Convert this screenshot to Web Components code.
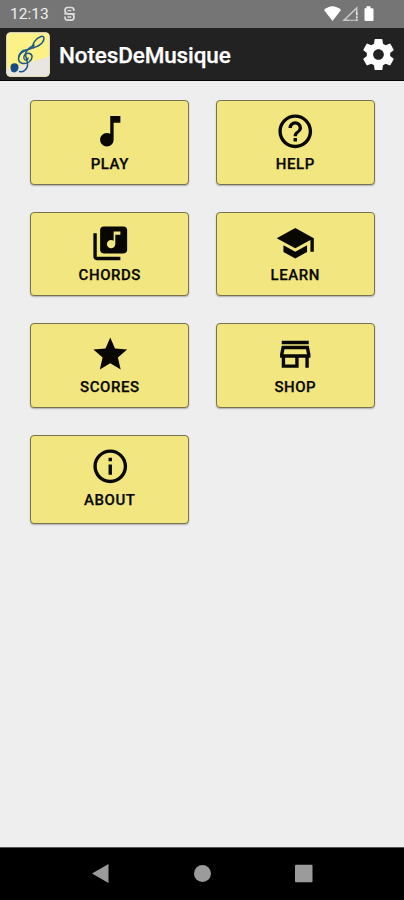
<!DOCTYPE html>
<html lang="en">
<head>
<meta charset="utf-8">
<title>NotesDeMusique</title>
<style>
html,body{margin:0;height:100%;background:#eee;font-family:Roboto,"Liberation Sans",sans-serif}
</style>
</head>
<body>
<music-app></music-app>
<script>
const define = (name, html) => {
  const t = document.createElement('template');
  t.innerHTML = html;
  customElements.define(name, class extends HTMLElement {
    constructor() {
      super();
      this.attachShadow({mode: 'open'}).append(t.content.cloneNode(true));
    }
  });
};

const ICONS = {
  play: '<path d="M12 3v10.55c-.59-.34-1.27-.55-2-.55-2.21 0-4 1.79-4 4s1.79 4 4 4 4-1.79 4-4V7h4V3h-6z"/>',
  help: '<path d="M11 18h2v-2h-2v2zm1-16C6.48 2 2 6.48 2 12s4.480 10 10 10 10-4.480 10-10S17.520 2 12 2zm0 18c-4.410 0-8-3.590-8-8s3.590-8 8-8 8 3.590 8 8-3.590 8-8 8zm0-14c-2.210 0-4 1.790-4 4h2c0-1.100.900-2 2-2s2 .900 2 2c0 2-3 1.750-3 5h2c0-2.250 3-2.500 3-5 0-2.210-1.790-4-4-4z"/>',
  chords: '<path d="M20 2H8c-1.100 0-2 .900-2 2v12c0 1.100.900 2 2 2h12c1.100 0 2-.900 2-2V4c0-1.100-.900-2-2-2zm-2 5h-3v5.500c0 1.380-1.120 2.500-2.500 2.500S10 13.880 10 12.500s1.120-2.500 2.500-2.500c.570 0 1.080.190 1.500.510V5h4v2zM4 6H2v14c0 1.100.900 2 2 2h14v-2H4V6z"/>',
  learn: '<path d="M5 13.180v4L12 21l7-3.820v-4L12 17l-7-3.820zM12 3L1 9l11 6 9-4.910V17h2V9L12 3z"/>',
  scores: '<path d="M12 17.270L18.180 21l-1.640-7.030L22 9.240l-7.190-.610L12 2 9.190 8.630 2 9.240l5.460 4.730L5.820 21z"/>',
  shop: '<path d="M18.360 9l.600 3H5.040l.600-3h12.720M20 4H4v2h16V4zm0 3H4l-1 5v2h1v6h10v-6h4v6h2v-6h1v-2l-1-5zM6 18v-4h6v4H6z"/>',
  about: '<path d="M11 7h2v2h-2zm0 4h2v6h-2zm1-9C6.480 2 2 6.480 2 12s4.480 10 10 10 10-4.480 10-10S17.520 2 12 2zm0 18c-4.410 0-8-3.590-8-8s3.590-8 8-8 8 3.590 8 8-3.590 8-8 8z"/>',
  settings: '<path d="M19.140 12.940c.040-.300.060-.610.060-.940 0-.320-.020-.640-.070-.940l2.030-1.580c.180-.140.230-.410.120-.610l-1.920-3.320c-.120-.220-.370-.290-.590-.220l-2.390.960c-.500-.380-1.030-.700-1.620-.940l-.360-2.540c-.040-.240-.240-.410-.480-.410h-3.840c-.240 0-.430.170-.470.410l-.360 2.540c-.590.240-1.130.570-1.620.940l-2.390-.960c-.220-.080-.470 0-.590.220L2.740 8.870c-.120.210-.080.470.120.610l2.030 1.580c-.050.300-.090.630-.090.940s.020.640.070.940l-2.030 1.580c-.180.140-.230.410-.120.610l1.920 3.320c.120.220.370.290.590.220l2.390-.960c.500.380 1.030.700 1.620.940l.360 2.540c.050.240.240.410.480.410h3.840c.240 0 .440-.170.470-.410l.360-2.540c.590-.240 1.130-.560 1.620-.940l2.390.960c.220.080.470 0 .590-.220l1.920-3.320c.120-.220.070-.470-.120-.610l-2.010-1.580zM12 15.300c-1.820 0-3.300-1.480-3.300-3.300s1.480-3.300 3.300-3.300 3.300 1.480 3.300 3.300-1.480 3.300-3.300 3.300z"/>'
};

customElements.define('md-icon', class extends HTMLElement {
  constructor() {
    super();
    this.attachShadow({mode: 'open'});
  }
  connectedCallback() {
    this.shadowRoot.innerHTML = `<style>:host{display:block;width:40.5px;height:40.5px}svg{display:block;width:100%;height:100%;fill:currentColor}</style><svg viewBox="0 0 24 24">${ICONS[this.getAttribute('name')]}</svg>`;
  }
});

define('status-bar', `<style>
:host{display:flex;align-items:center;height:28px;box-sizing:border-box;background:#757575;color:#f0f0f0;padding:0 29px 0 10px;font-size:15.500px}
.time{width:53px;line-height:28px}
svg{display:block}
.right{margin-left:auto}
</style>
<span class="time"><slot></slot></span>
<svg width="13" height="16" viewBox="0 0 13 16" fill="none" stroke="#dedede" stroke-width="1.700"><path d="M10.800 5V4Q10.800 1.500 8.300 1.500H4.500Q2 1.500 2 4.500Q2 7.800 5 7.800H8Q11 7.800 11 11Q11 14.200 8.300 14.200H4.500Q2 14.200 2 11.500V10.500"/><path d="M1 7.800H12.200M4.500 4.700H8.300M4.500 11H8.300" stroke-width="1.300"/></svg>
<svg class="right" width="51" height="18" viewBox="0 0 51 18"><path d="M0 5Q8.500-2.500 17 5L8.500 16Z" fill="#fff"/><path d="M20 15.300H32.700V3Z" fill="none" stroke="#ccc" stroke-width="1.500"/><path d="M24.500 15.500 33 7V15.500Z" fill="#757575" opacity=".5"/><path d="M32.700 7V10M32.700 11.500V13M32.700 14.500V16" stroke="#e4e4e4" stroke-width="1.500"/><path d="M40.500 3.200H42.500V1.300H46.500V3.200H48.500Q49.500 3.200 49.500 4.200V15Q49.500 16 48.500 16H41.500Q40.500 16 40.500 15Z" fill="#fff"/></svg>`);

define('clef-logo', `<style>:host{display:block;width:44px;height:45px}svg{display:block}</style>
<svg width="44" height="45" viewBox="0 0 44 45"><defs><clipPath id="c"><rect x=".5" y=".5" width="43" height="44" rx="4"/></clipPath></defs>
<g clip-path="url(#c)"><rect width="44" height="45" fill="#fcf184"/><path d="M0 38 44 24V45H0Z" fill="#e9e5e1"/></g>
<rect x=".8" y=".8" width="42.400" height="43.400" rx="4" fill="none" stroke="#ede8c8" stroke-width="1.200"/>
<g fill="none" stroke="#1d5787" stroke-width="1.500" stroke-linecap="round" stroke-linejoin="round">
<path d="M27.500 16C25.500 12 30 6 35 4.500C39 3.500 38.500 8 36 11C33 14.500 29 15 25 16.500C19 18 12.500 21 12.500 26.500C12.500 31.500 18.500 33 23 30C27 27 27 22.500 23.500 21.500C20 20.500 17 23.500 18 26.500C19 29 22 28.500 22 26"/>
<path d="M28 13C24 15.500 19.500 18 19.500 22C19.500 26 22.500 30 21.500 34C20.500 38 17 40.500 13.500 39.500M13 25C13.500 20 17 17.500 21 18.500"/>
<path d="M5.500 37.500C6 40 9 40.500 11 38"/></g>
<circle cx="8.500" cy="35.300" r="4" fill="#174c80"/></svg>`);

define('app-bar', `<style>
:host{display:flex;align-items:center;height:53px;box-sizing:border-box;padding:0 6px;background:#222;border-bottom:1.500px solid #050505;color:#fff}
h1{margin:0 0 0 9px;padding-top:2px;font-size:22.500px;font-weight:500;line-height:28px;letter-spacing:-.13px;-webkit-text-stroke:.25px #fff}
md-icon{margin-left:auto;width:39px;height:39px}
</style><clef-logo></clef-logo><h1><slot></slot></h1><md-icon name="settings"></md-icon>`);

customElements.define('menu-card', class extends HTMLElement {
  constructor() {
    super();
    this.attachShadow({mode: 'open'});
  }
  connectedCallback() {
    this.shadowRoot.innerHTML = `<style>
:host{display:flex;flex-direction:column;align-items:center;gap:2px;box-sizing:border-box;height:84.500px;padding-top:10px;background:#f1e680;border:1px solid #77734f;border-radius:4px;box-shadow:0 1px 1.500px #0004;color:#080800;font-size:15px;font-weight:500;line-height:20px;letter-spacing:.55px}
span{-webkit-text-stroke:.25px currentColor}
:host([tall]){height:89.500px;gap:4px}
</style><md-icon name="${this.getAttribute('icon')}"></md-icon><span><slot></slot></span>`;
  }
});

define('menu-grid', `<style>
:host{display:grid;grid-template-columns:159px 159px;column-gap:26.500px;row-gap:26.900px;align-content:start;padding:19.400px 0 0 30.300px;flex:1}
</style><slot></slot>`);

define('nav-bar', `<style>
:host{display:flex;justify-content:space-between;height:53px;box-sizing:border-box;padding:16px 91px 0 92px;background:#000;border-top:1px solid #555}
svg{display:block;fill:#9b9b9b}
</style>
<svg width="18" height="20"><path d="M16.500 0V19L0 9.500Z"/></svg>
<svg width="18" height="20"><circle cx="8.500" cy="9.500" r="8.500"/></svg>
<svg width="18" height="20"><rect y=".7" width="17.500" height="17.500" rx="1"/></svg>`);

define('music-app', `<style>
:host{display:flex;flex-direction:column;height:900px;background:#eee}
</style>
<status-bar>12:13</status-bar>
<app-bar>NotesDeMusique</app-bar>
<menu-grid>
<menu-card icon="play">PLAY</menu-card>
<menu-card icon="help">HELP</menu-card>
<menu-card icon="chords">CHORDS</menu-card>
<menu-card icon="learn">LEARN</menu-card>
<menu-card icon="scores">SCORES</menu-card>
<menu-card icon="shop">SHOP</menu-card>
<menu-card icon="about" tall>ABOUT</menu-card>
</menu-grid>
<nav-bar></nav-bar>`);
</script>
</body>
</html>
